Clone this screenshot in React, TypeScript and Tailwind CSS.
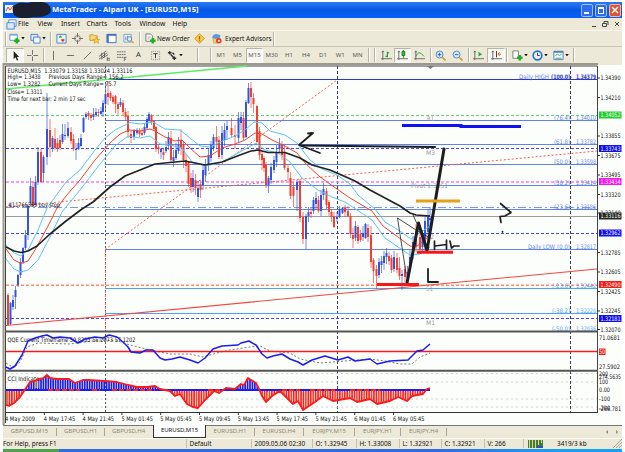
import React from 'react';
import clsx from 'clsx';

type Point = [number, number];
// x, high, low, body top, body bottom, bullish
type Candle = [number, number, number, number, number, 0 | 1];

const candles: Candle[] = [
    [8, 293, 325, 295, 325, 0], [10.5, 302, 325, 303, 324, 1], [13, 295, 310, 300, 307, 1], [15.5, 286, 309, 290, 297, 1],
    [18, 274, 287, 275, 285, 1], [20.5, 258, 278, 262, 275, 1], [23, 247, 264, 248, 262, 1], [25.5, 230, 250, 235, 248, 1],
    [28, 204, 240, 206, 235, 1], [30.5, 178, 204, 186, 203, 1], [33, 182, 206, 187, 206, 0], [35.5, 176, 204, 182, 205, 1],
    [38, 147, 185, 152, 182, 1], [41, 148, 183, 152, 182, 0], [43.5, 155, 182, 157, 173, 1], [47, 93, 165, 129, 157, 1],
    [50, 119, 157, 130, 147, 0], [52.5, 136, 152, 138, 149, 1], [55, 128, 150, 139, 148, 0], [57.5, 138, 152, 143, 148, 0],
    [60, 135, 150, 140, 148, 0], [62.5, 124, 144, 134, 142, 1], [65, 124, 140, 135, 136, 1], [68, 122, 138, 128, 136, 1],
    [71, 127, 144, 132, 141, 0], [73.5, 134, 151, 139, 149, 0], [76, 143, 160, 149, 150, 1], [78.5, 138, 150, 143, 149, 1],
    [81, 134, 147, 138, 146, 1], [83.5, 117, 133, 118, 132, 1], [86, 112, 119, 114, 117, 1], [88.5, 111, 120, 113, 116, 0],
    [91, 113, 121, 115, 118, 0], [93.5, 108, 120, 114, 117, 1], [96, 108, 117, 112, 115, 1], [98.5, 109, 117, 112, 113, 0],
    [101, 107, 115, 111, 114, 1], [103, 100, 117, 103, 112, 1], [105.5, 82, 110, 94, 104, 1], [108, 81, 105, 93, 97, 0],
    [110.5, 91, 101, 93, 98, 0], [113, 95, 104, 97, 102, 0], [115.5, 95, 113, 96, 104, 0], [118, 102, 115, 104, 109, 0],
    [120.5, 98, 107, 102, 105, 1], [123, 100, 115, 103, 112, 0], [125.5, 108, 121, 112, 117, 0], [128, 111, 138, 116, 132, 0],
    [131, 130, 143, 134, 138, 0], [134, 129, 140, 131, 137, 1], [137, 128, 135, 130, 133, 1], [139.5, 128, 137, 131, 134, 0],
    [142, 128, 136, 133, 135, 0], [144.5, 123, 135, 127, 133, 1], [147, 117, 129, 119, 128, 1], [149, 112, 123, 114, 121, 1],
    [151.5, 114, 125, 115, 122, 0], [154, 120, 131, 121, 129, 0], [156, 126, 152, 127, 149, 0], [158.5, 145, 154, 147, 149, 0],
    [161, 148, 159, 149, 152, 1], [163.5, 149, 160, 152, 155, 0], [166, 141, 153, 147, 151, 1], [168.5, 132, 150, 137, 146, 1],
    [171, 131, 162, 138, 160, 0], [173.5, 150, 167, 157, 161, 1], [176, 143, 160, 150, 158, 1], [178.5, 137, 154, 145, 151, 1],
    [181, 129, 155, 140, 148, 0], [183.5, 142, 168, 144, 160, 0], [186, 154, 172, 160, 166, 0], [188.5, 162, 187, 162, 184, 0],
    [191, 173, 193, 178, 187, 0], [193, 170, 192, 178, 187, 1], [195.5, 174, 195, 180, 188, 0], [198, 181, 202, 188, 197, 1],
    [200.5, 180, 198, 184, 190, 0], [203, 165, 190, 170, 185, 1], [205.5, 159, 182, 165, 175, 1], [208.5, 148, 171, 155, 165, 1],
    [211, 141, 162, 145, 158, 1], [213.5, 134, 151, 137, 148, 1], [216.5, 126, 148, 137, 142, 0], [219, 136, 159, 140, 157, 0],
    [222, 126, 159, 133, 155, 1], [224.5, 123, 146, 130, 140, 1], [227, 121, 140, 126, 130, 1], [231.5, 118, 137, 128, 135, 0],
    [235, 125, 149, 135, 137, 0], [238.5, 112, 142, 118, 138, 1], [241, 112, 130, 117, 123, 1], [243.5, 112, 140, 118, 138, 0],
    [246, 100, 138, 102, 137, 1], [248.5, 83, 104, 88, 103, 1], [251, 82, 108, 88, 97, 0], [253.5, 93, 113, 98, 104, 0],
    [257, 105, 143, 106, 142, 0], [259.5, 127, 160, 131, 155, 0], [262, 152, 170, 154, 160, 0], [264, 156, 172, 158, 168, 0],
    [266, 162, 188, 165, 185, 0], [268.5, 176, 193, 178, 185, 1], [271, 163, 184, 167, 180, 1], [274, 156, 173, 160, 170, 1],
    [276.5, 145, 167, 152, 162, 1], [279.5, 138, 153, 145, 149, 1], [282, 141, 160, 145, 155, 0], [284.5, 145, 170, 152, 168, 0],
    [288, 164, 180, 168, 172, 0], [290.5, 172, 199, 178, 196, 0], [293.5, 182, 207, 187, 196, 0], [297, 180, 211, 182, 190, 1],
    [300, 179, 222, 181, 218, 0], [303, 212, 244, 217, 239, 0], [306, 214, 249, 216, 239, 1], [308.5, 207, 222, 212, 216, 1],
    [311, 208, 218, 212, 214, 0], [313.5, 197, 214, 200, 211, 1], [316, 192, 210, 198, 204, 1], [318.5, 196, 213, 200, 211, 0],
    [321, 190, 216, 195, 211, 1], [323.5, 183, 200, 189, 195, 1], [326.5, 188, 209, 191, 205, 0], [329, 200, 216, 202, 212, 0],
    [331.5, 209, 222, 212, 217, 0], [334, 212, 228, 216, 227, 0], [337, 212, 222, 217, 219, 1], [339.5, 206, 218, 209, 217, 1],
    [342.5, 207, 214, 208, 213, 1], [345, 205, 217, 208, 212, 0], [348, 206, 217, 211, 216, 0], [350.5, 213, 238, 216, 234, 0],
    [353, 228, 248, 235, 239, 0], [355.5, 221, 241, 226, 238, 1], [358, 225, 244, 227, 241, 0], [360.5, 230, 242, 234, 240, 0],
    [363, 226, 241, 234, 237, 1], [365.5, 223, 239, 224, 238, 1], [368, 224, 242, 228, 237, 0], [371, 226, 268, 235, 262, 0],
    [373.5, 258, 283, 260, 271, 0], [376.5, 265, 289, 269, 276, 0], [379, 258, 278, 262, 275, 1], [381.5, 256, 273, 261, 265, 1],
    [384, 251, 270, 256, 263, 1], [386.5, 248, 264, 253, 257, 1], [389, 252, 265, 256, 261, 0], [391.5, 255, 273, 258, 270, 0],
    [394, 251, 272, 257, 269, 1], [397, 253, 273, 258, 270, 0], [399.5, 257, 280, 268, 276, 0], [402, 270, 290, 274, 276, 1],
    [405, 266, 282, 269, 277, 0], [407.5, 266, 282, 272, 278, 1], [410, 250, 272, 257, 269, 1], [413, 236, 259, 242, 253, 1],
    [416, 224, 252, 231, 246, 0], [420, 228, 252, 237, 250, 0], [422.5, 230, 252, 235, 247, 1], [425, 216, 250, 221, 245, 1],
    [428, 210, 235, 216, 232, 1], [430, 207, 228, 218, 220, 1],
];

const slowMa: Point[] = [
    [6, 247], [14, 251], [21, 252.5], [28, 251], [37, 246], [50, 234], [66, 221], [82, 209], [93, 202], [101, 195], [110, 187],
    [125, 176], [140, 170], [155, 164], [170, 162.5], [185, 161], [195, 163], [205, 165], [222, 162], [240, 155], [251, 151],
    [258, 150], [268, 152.5], [285, 152.5], [300, 158], [312, 165], [330, 170], [337, 173], [355, 181], [370, 190], [385, 198],
    [400, 206], [410, 213], [416, 215], [430, 216],
];
const midMa: Point[] = [
    [6, 249], [14, 260], [21, 263.5], [28, 261], [35, 250], [47, 228], [57, 208], [66, 196], [80, 180], [95, 160], [110, 143],
    [120, 134], [129, 130], [140, 131], [150, 129], [155, 131], [165, 137], [175, 141], [182, 140], [190, 148], [200, 157],
    [210, 156], [222, 148], [235, 144], [245, 140], [255, 133], [262, 134], [272, 140], [285, 146], [297, 153], [305, 163],
    [320, 177], [337, 189], [350, 198], [372, 211], [383, 226], [398, 237], [410, 246], [416, 247], [430, 236],
];
const upperBand: Point[] = [
    [6, 245], [14, 253], [21, 256], [28, 250], [38, 230], [47, 208], [55, 197], [66, 182], [80, 170], [95, 150], [105, 138],
    [115, 130], [130, 122.5], [140, 124], [153, 122], [165, 129], [180, 130], [190, 138], [200, 146], [210, 147], [220, 142],
    [235, 136], [245, 130], [254, 122], [262, 123], [270, 131], [285, 135], [297, 143], [310, 160], [322, 169], [337, 175],
    [350, 184], [358, 195], [375, 209], [385, 222], [400, 231], [411, 239], [430, 226],
];
const lowerBand: Point[] = [
    [6, 259], [14, 269], [21, 272], [28, 270], [38, 260], [50, 237], [62, 212], [80, 190], [100, 164], [115, 146], [128, 136],
    [140, 138], [150, 136], [160, 144], [170, 145], [182, 148], [192, 162], [205, 166], [220, 163], [240, 152], [256, 143],
    [265, 150], [278, 153], [290, 162], [302, 178], [318, 190], [332, 197], [345, 202], [360, 212], [372, 220], [385, 238],
    [398, 247], [410, 255], [420, 254], [430, 247],
];
const qqe: Point[] = [
    [6, 367], [10, 369], [15, 366], [22, 355], [28, 341], [35, 338], [42, 336], [47, 335], [53, 338], [60, 337], [70, 338],
    [78, 343], [85, 339], [95, 337], [103, 338], [109, 335], [117, 337], [123, 342], [128, 347], [131, 352], [140, 353],
    [146, 350], [153, 350], [160, 358], [165, 360], [172, 359], [180, 357], [190, 360], [198, 363], [205, 358], [213, 349],
    [222, 346], [238, 345], [241, 343], [249, 341], [256, 345], [262, 354], [267, 358], [273, 356], [282, 354], [290, 359],
    [298, 362], [303, 365], [312, 360], [325, 356], [338, 360], [348, 357], [355, 361], [370, 359], [377, 364], [390, 361],
    [408, 360], [417, 351], [423, 350], [430, 344],
];
const qqeSlow: Point[] = [
    [6, 363], [14, 368], [20, 362], [27, 347], [38, 343], [70, 344], [100, 340], [118, 341], [130, 345], [150, 350], [170, 354],
    [190, 354], [203, 357], [217, 353], [230, 350], [250, 347], [260, 346], [270, 351], [290, 353], [300, 359], [320, 363],
    [370, 359], [385, 361], [400, 364], [412, 364], [420, 357], [430, 353],
];
const cci: Point[] = [
    [6, 405], [9, 406], [14, 403], [20, 397], [26, 388], [30, 382], [35, 381], [38, 379], [42, 379], [47, 375], [50, 378],
    [57, 379], [69, 379], [75, 383], [83, 380], [88, 380], [105, 381], [117, 382], [128, 385], [137, 387], [147, 387],
    [155, 386], [160, 389], [170, 391], [175, 396], [180, 394], [187, 404], [193, 407], [198, 408], [205, 400], [214, 391],
    [219, 393], [226, 388], [235, 389], [241, 384], [244, 385], [248, 378], [256, 383], [259, 389], [262, 396], [266, 402],
    [272, 396], [280, 391], [285, 396], [293, 404], [298, 401], [303, 410], [309, 406], [315, 402], [323, 396], [333, 401],
    [350, 398], [357, 402], [370, 399], [377, 404], [390, 401], [398, 397], [407, 401], [412, 396], [423, 394], [427, 389],
    [430, 388],
];

const valueAt = (pts: Point[], x: number) => {
    for (let i = 1; i < pts.length; i++) {
        if (x <= pts[i][0]) {
            const [x0, y0] = pts[i - 1];
            const [x1, y1] = pts[i];
            return y0 + ((y1 - y0) * (x - x0)) / (x1 - x0);
        }
    }
    return pts[pts.length - 1][1];
};
const cciBars = Array.from({ length: 174 }, (_, i) => 7 + i * 2.43).map((x) => ({ x, y: valueAt(cci, x) }));

// fibonacci levels of the daily range: y, colour, ratio label, its x and width, price
const fibs: [number, string, string, number, number, string][] = [
    [79.5, '#2c38c8', '(100.0)-', 551, 21, '1.34379'],
    [120.5, '#5f83e8', '(76.4)-', 554, 18, '1.34010'],
    [144.5, '#5f83e8', '(61.8)-', 554, 18, '1.33782'],
    [164.5, '#5f83e8', '(50.0)-', 554, 18, '1.33598'],
    [185.5, '#5f83e8', '(38.2)-', 554, 18, '1.33414'],
    [209.5, '#5f83e8', '(23.6)-', 554, 18, '1.33186'],
    [249.5, '#5f83e8', '(0.0)-', 557, 15, '1.32817'],
    [288.5, '#4aa3f5', '(-23.6)-', 552, 20, '1.32442'],
    [313.5, '#4aa3f5', '(-38.2)-', 552, 20, '1.32220'],
];

const prices: [number, string, string?][] = [
    [78, '1.34390'], [97.5, '1.34210'], [136, '1.33855'], [155.5, '1.33675'], [175, '1.33495'], [194.5, '1.33320'],
    [213, '1.33140'], [252.5, '1.32785'], [272, '1.32605'], [291.5, '1.32425'], [311, '1.32245'], [329.5, '1.32070'],
    [115, '1.34052', '#1fce2c'], [148.5, '1.33743', '#0d0df0'], [181.5, '1.33434', '#ff12f2'], [216, '1.33116', '#262626'],
    [233, '1.32962', '#0d0df0'], [284.5, '1.32490', '#fb1a12'], [318.5, '1.32181', '#0d0df0'],
];

const times = ['4 May 2009', '4 May 17:45', '4 May 21:45', '5 May 01:45', '5 May 05:45', '5 May 09:45', '5 May 13:45', '5 May 17:45', '5 May 21:45', '6 May 01:45', '6 May 05:45'];

const T: React.FC<{ x: number; y: number; w: number; fill?: string; bold?: boolean; children: string }> = ({ x, y, w, fill = '#111', bold, children }) => (
    <text x={x} y={y} textLength={w} lengthAdjust="spacingAndGlyphs" fill={fill} fontSize={6.2} fontWeight={bold ? 700 : 400} xmlSpace="preserve">
        {children}
    </text>
);

const Line: React.FC<{ pts: Point[]; color: string; width?: number; dash?: string }> = ({ pts, color, width = 1, dash }) => (
    <polyline points={pts.map((p) => p.join(',')).join(' ')} fill="none" stroke={color} strokeWidth={width} strokeDasharray={dash} strokeLinejoin="round" />
);

const Chart = () => (
    <svg viewBox="3 63 619 362" className="block h-[362px] w-[619px] shrink-0 overflow-visible font-['DejaVu_Sans',sans-serif]">
        <rect x="3" y="63" width="619" height="362" fill="#ece9d8" />
        <rect x="5" y="65" width="617" height="360" fill="#fcfefc" />
        <path d="M3.5 425V64H598" fill="none" stroke="#9c998c" strokeWidth="2" />
        <path d="M5.5 423V66H597.5V412" fill="none" stroke="#444" />

        {/* vertical separators */}
        <path d="M105.5 66V412" stroke="#555" strokeDasharray="2 2" />
        <path d="M105.5 249V331" stroke="#f66" strokeDasharray="2 2" strokeDashoffset="2" />
        <path d="M337.5 66V412M570.5 66V412" stroke="#3c3c55" strokeDasharray="3 2" />

        {/* horizontal levels */}
        <path d="M6 115.5H597" stroke="#6fcf6f" strokeDasharray="3 2" />
        <path d="M6 148.5H597M6 233.5H597M6 318.5H597" stroke="#4444ee" strokeDasharray="3 2" />
        <path d="M6 182H597" stroke="#ff7af0" strokeDasharray="3 2" strokeWidth="1.3" />
        <path d="M6 285.2H597" stroke="#ff8a70" strokeDasharray="3 2" strokeWidth="1.4" />
        <path d="M6 207.5H597" stroke="#7b98e8" strokeDasharray="8 3 2 3" />
        <path d="M6 216.5H597" stroke="#9a9a9a" />
        {fibs.map(([y, color, ratio, x, w, price]) => (
            <g key={y}>
                <path d={`M105 ${y}H597`} stroke={color} />
                <T x={x} y={y - 1} w={w} fill={color} bold={y < 80}>{ratio}</T>
                <T x={576} y={y - 1} w={20} fill={color} bold={y < 80}>{price}</T>
            </g>
        ))}
        <T x={519} y={78.5} w={30} fill="#5f83e8">Daily HIGH</T>
        <T x={528} y={248.5} w={27} fill="#5f83e8">Daily LOW</T>
        <T x={552} y={331} w={20} fill="#4aa3f5">(-50.0)-</T>
        <T x={576} y={331} w={20} fill="#4aa3f5">1.32036</T>

        {/* trend lines */}
        <path d="M6 89L247 66" stroke="#5fec5f" strokeWidth="1.4" />
        <path d="M6 325.5L597 269" stroke="#f4473e" strokeWidth="1.1" />
        <path d="M6 207L597 151M105 249.5L337 80" stroke="#f4604f" strokeDasharray="2 2" />

        {/* pivots */}
        <T x={427} y={121} w={7} fill="#999">R1</T>
        <T x={426} y={155} w={9} fill="#999">M3</T>
        <T x={411} y={187.5} w={37} fill="#999">Pivot 1.3351</T>
        <T x={426} y={239} w={8} fill="#999">M2</T>
        <T x={426} y={291} w={7} fill="#999">S1</T>
        <T x={426} y={324.5} w={9} fill="#999">M1</T>

        {candles.map(([x, high, low, top, bottom, up]) => (
            <g key={x} stroke={up ? '#3454e0' : '#f24030'}>
                <path d={`M${x} ${high}V${low}`} strokeWidth="0.9" strokeOpacity="0.75" />
                <path d={`M${x} ${top}V${Math.max(bottom, top + 1)}`} strokeWidth="2" />
            </g>
        ))}

        <Line pts={upperBand} color="#5cc4f0" />
        <Line pts={lowerBand} color="#5cc4f0" />
        <Line pts={midMa} color="#ee4436" />
        <Line pts={slowMa} color="#222" width={1.7} />

        <g>
            <T x={7.5} y={73} w={125}>EURUSD,M15  1.33079 1.33158 1.33024 1.33116</T>
            <T x={7.5} y={79.2} w={33}>High= 1.3438</T>
            <T x={48.5} y={79.2} w={75}>Previous Days Range= 156.2</T>
            <T x={7.5} y={86.3} w={33}>Low= 1.3282</T>
            <T x={48.5} y={86.3} w={68}>Current Days Range= 75.7</T>
            <T x={7.5} y={93.6} w={35}>Close= 1.3311</T>
            <T x={7.5} y={101} w={78}>Time for next bar: 2 min 17 sec</T>
            <T x={8} y={206.5} w={52}>#11766369 buy stop</T>
        </g>

        {/* hand drawn marks */}
        <g fill="none" stroke="#1e1e1e" strokeLinejoin="round" strokeLinecap="round">
            <path d="M301 145.5L348 146L435 147" strokeWidth="2" />
            <path d="M313 133L299 145L320 153M308 133.5L312 133" strokeWidth="1.8" />
            <path d="M406 273L397.5 218L416 230L430 238M413 215L419 228" strokeWidth="0.8" />
            <path d="M407 283L418.5 223L427 250.5L444 149" strokeWidth="3" />
            <path d="M434.5 241V249.5M435 246L446.500 244.5M446.500 240V249M450 241L451.500 248L454 246H459" strokeWidth="1.7" />
            <path d="M428 269V282H438" strokeWidth="1.8" />
            <path d="M500.5 203.5L511 212.5L505 216L500 216.5L501 222.5M502.5 231.5V232" strokeWidth="1.7" />
        </g>
        <path d="M402 125.5H461V126.5H521" fill="none" stroke="#1010f4" strokeWidth="3" />
        <path d="M416 201H460" stroke="#e5a01c" strokeWidth="3" />
        <path d="M417 252.3H453M377 284.5H419" stroke="#fa1616" strokeWidth="3" />
        <path d="M427 66H434L430.5 69Z" fill="#777" />

        {/* QQE window */}
        <path d="M5 331.5H598M5 370.8H598" stroke="#555" strokeWidth="2" />
        <Line pts={qqeSlow} color="#555" dash="2 2" width={0.8} />
        <path d="M6 351.5H597" stroke="#fb1818" strokeWidth="1.6" />
        <T x={7.5} y={341.5} w={128}>QQE Current Timeframe 59.8293 55.2073 57.1202</T>
        <Line pts={qqe} color="#1c1cf0" width={1.5} />

        {/* CCI window */}
        <path d="M6 373.5H597M6 382H597M6 399H597M6 407H597" stroke="#c9c9c4" strokeDasharray="2 3" strokeWidth="0.8" />
        {cciBars.map(({ x, y }, i) => (
            <path key={i} d={`M${x} 390V${y}`} strokeWidth="1.7" stroke={y < 390 ? '#1a1af0' : i % 3 ? '#fa2020' : '#e85030'} />
        ))}
        <path d="M36 380V388M37.8 380V388M268 392V399" stroke="#f4d840" />
        <path d="M6 390H430" stroke="#1c1cf0" strokeWidth="2.2" />
        <path d="M48 390H80M92 390H100M112 390H155M208 390H220M282 390H300M310 390H335M350 390H380" stroke="#fa2020" strokeWidth="2" strokeDasharray="5 2" />
        <T x={7.5} y={380.5} w={34}>CCI Indicator</T>
        <Line pts={cci} color="#fa1c1c" width={1.8} />
        <path d="M5 412.5H598" stroke="#333" />

        {/* price axis */}
        <g className="font-['DejaVu_Sans_Condensed','DejaVu_Sans',sans-serif]">
            {prices.map(([y, label, bg]) => (
                <g key={label}>
                    {bg ? <rect x="599" y={y - 3.5} width="22.5" height="7" fill={bg} /> : <path d={`M597 ${y}h3`} stroke="#333" />}
                    <T x={600.5} y={y + 2.3} w={20} fill={bg ? '#fff' : '#111'}>{label}</T>
                </g>
            ))}
            <T x={599} y={339.5} w={21}>71.0681</T>
            <T x={599} y={369} w={21}>27.5902</T>
            <rect x="599" y="348.5" width="6.5" height="6.5" fill="#fb1a12" />
            <T x={599.5} y={353.8} w={5.5} fill="#fff">50</T>
            <T x={599} y={378.5} w={22}>274.5635</T>
            <T x={599} y={375.5} w={9}>200</T>
            <T x={599} y={384} w={9}>100</T>
            <T x={599} y={392.3} w={11}>0.00</T>
            <T x={599} y={401} w={11}>-100</T>
            <T x={599} y={409.5} w={11}>-200</T>
            <T x={599} y={410.5} w={22}>-266.781</T>
        </g>

        {/* time axis */}
        {times.map((t, i) => (
            <g key={t}>
                <path d={`M${5.5 + i * 38.8} 412v3`} stroke="#333" />
                <T x={5 + i * 38.8} y={421} w={i ? 31.5 : 30}>{t}</T>
            </g>
        ))}
    </svg>
);

const Icon: React.FC<{ w: number; children?: React.ReactNode; on?: boolean; menu?: boolean }> = ({ w, children, on, menu }) => (
    <span className={clsx('flex h-[15px] shrink-0 items-center justify-center gap-px', on && 'border border-[#b8b5a5] border-r-white border-b-white bg-[#f8f7f1]')} style={{ width: w }}>
        <svg viewBox="0 0 12 12" className="h-[11px] w-[11px] shrink-0" fill="none">{children}</svg>
        {menu && <svg viewBox="0 0 4 3" className="h-[2.5px] w-[4px] shrink-0"><path d="M0 0H4L2 3Z" fill="#111" /></svg>}
    </span>
);

const Sep: React.FC<{ w?: number }> = ({ w = 5 }) => (
    <span className="flex h-[14px] shrink-0 justify-center" style={{ width: w }}>
        <i className="w-px bg-[#b5b2a2]" />
        <i className="w-px bg-white" />
    </span>
);

const GreenPlus = () => <path d="M8.5 5.5V11.5M5.5 8.5H11.5" stroke="#1fae2b" strokeWidth="2.8" />;
const Axes = () => <path d="M2 1V11M0 9.5H12M1 2.5L2 1L3 2.5" stroke="#666" />;

const menus: [string, number][] = [['File', 19.5], ['View', 23.5], ['Insert', 25.5], ['Charts', 28], ['Tools', 25], ['Window', 33], ['Help', 20]];
const frames: [string, number][] = [['M1', 16], ['M5', 17], ['M15', 17], ['M30', 17.5], ['H1', 17], ['H4', 17], ['D1', 17], ['W1', 17.5], ['MN', 17]];
const tabs: [string, number][] = [['GBPUSD,M15', 54], ['GBPUSD,H1', 48], ['GBPUSD,H4', 48], ['EURUSD,M15', 53], ['EURUSD,H1', 49], ['EURUSD,H4', 49], ['EURJPY,M15', 51], ['EURJPY,H1', 46], ['EURJPY,H4', 46]];
const status: [string, number][] = [['For Help, press F1', 184], ['Default', 65], ['2009.05.06 02:30', 61], ['O: 1.32945', 44], ['H: 1.33008', 43], ['L: 1.32921', 42], ['C: 1.32921', 43], ['V: 266', 39]];

const TitleBar = () => (
    <header className="flex h-[16px] shrink-0 items-center bg-gradient-to-b from-[#2a7bf5] via-[#0757e4] to-[#0660fa] pl-[2px] text-white">
        <svg viewBox="0 0 47 16" className="h-[16px] w-[47px] shrink-0">
            <rect x="0" y="3" width="8" height="8" fill="#f4f0ea" />
            <path d="M1 9L3 5L5 8L8 4" stroke="#e04a3a" fill="none" />
            <path d="M8 5Q12 -1 22 1Q36 -2 43 2Q47 6 45 11Q40 16 28 15Q14 18 9 13Q7 9 8 5Z" fill="#1b1f2e" />
        </svg>
        <b className="font-['Open_Sans',sans-serif] text-[7.6px] leading-none whitespace-pre">MetaTrader - Alpari UK - [EURUSD,M15]</b>
        <div className="ml-auto flex gap-[2px] pr-px">
            <span className="flex h-[13px] w-[12px] items-end rounded-[2px] border border-[#9fc0f8] bg-[#2f6bea] p-[2px]"><i className="h-[2px] w-[5px] bg-white" /></span>
            <span className="flex h-[13px] w-[12px] rounded-[2px] border border-[#9fc0f8] bg-[#2f6bea] p-[2px]"><i className="h-[7px] w-[6px] border border-t-2 border-white" /></span>
            <span className="flex h-[13px] w-[12px] items-center justify-center rounded-[2px] border border-[#f0b8a8] bg-[#e2522c]">
                <svg viewBox="0 0 8 8" className="h-[8px] w-[8px]"><path d="M1 1L7 7M7 1L1 7" stroke="#fff" strokeWidth="1.5" /></svg>
            </span>
        </div>
    </header>
);

const MenuBar = () => (
    <nav className="flex h-[13px] shrink-0 items-center border-b border-[#f8f7f0] pl-px text-[6.8px] leading-none">
        <Icon w={14}>
            <path d="M3 1H11V8H3Z" fill="#fff" stroke="#4a86d8" />
            <path d="M1 4H9V11H1Z" fill="#d8e8fb" stroke="#4a86d8" />
        </Icon>
        {menus.map(([label, w]) => <span key={label} className="shrink-0" style={{ width: w }}>{label}</span>)}
        <svg viewBox="0 0 30 8" className="ml-auto h-[8px] w-[30px]" fill="none" stroke="#444">
            <path d="M0 6.5H4M10.5 3.5H14.5V6.5H10.5ZM12 3V1.5H16V5M23 2L27 6M27 2L23 6" />
        </svg>
    </nav>
);

const StandardBar = () => (
    <div className="flex h-[16px] shrink-0 items-center border-b border-[#c9c6b6] pl-[2px] text-[6.4px]">
        <Sep w={2} />
        <Icon w={20} menu>
            <path d="M1 1.5H9V8H1Z" fill="#fff" stroke="#5c8fc8" />
            <path d="M1 2.5H9" stroke="#7fb2ea" />
            <GreenPlus />
        </Icon>
        <Icon w={21} menu>
            <path d="M1 1.5H8.5V8H1Z" fill="#d9e9fb" stroke="#4a80c0" />
            <path d="M4 4.5H11V11H4Z" fill="#f3f8fd" stroke="#4a80c0" />
        </Icon>
        <Sep w={5} />
        <Icon w={16}>
            <path d="M1 1.5H11V11H1Z" fill="#eaf3fc" stroke="#4a80c0" />
            <path d="M3.5 5L5 3.5L6 5" stroke="#1fae2b" strokeWidth="1.5" />
            <path d="M6 7L7.5 8.5L9 7" stroke="#e03a20" strokeWidth="1.8" />
        </Icon>
        <Icon w={17}>
            <circle cx="6" cy="6" r="3.2" stroke="#777" />
            <path d="M6 0V4.5M6 7.5V12M0 6H4.5M7.5 6H12" stroke="#666" />
        </Icon>
        <Icon w={17}>
            <path d="M1 2H5L6 3H9V8H1Z" fill="#f6da7a" stroke="#c59a2a" />
            <path d="M8 4.5L9.1 7H11.7L9.7 8.6L10.4 11.3L8 9.7L5.6 11.3L6.3 8.6L4.3 7H6.9Z" fill="#ffd534" stroke="#c98a1a" strokeWidth=".6" />
        </Icon>
        <Icon w={17}>
            <path d="M1 1.5H11V10.5H1Z" fill="#fff" stroke="#3a70c0" />
            <path d="M1 2H11M2 2V10" stroke="#3a70c0" strokeWidth="2" />
        </Icon>
        <Icon w={17}>
            <path d="M1 1.5H9V10H1Z" fill="#eef4fb" stroke="#7f9fc8" />
            <path d="M3 4V8M5 3V7" stroke="#5f8fc8" />
            <circle cx="7" cy="6.5" r="2.5" fill="#dcebf8" stroke="#5a80b0" />
            <path d="M9 8.5L11.5 11" stroke="#d9a32a" strokeWidth="1.5" />
        </Icon>
        <Sep w={6} />
        <Icon w={14}>
            <path d="M1 1H6L8 3V9H1Z" fill="#fff" stroke="#777" />
            <path d="M3 4.5H6M3 6.5H5" stroke="#999" />
            <GreenPlus />
        </Icon>
        <span className="w-[34px] shrink-0 whitespace-nowrap">New Order</span>
        <Icon w={17}>
            <path d="M6 .8L11.2 6L6 11.2L.8 6Z" fill="#fbd24a" stroke="#d08a18" />
            <path d="M6 3.5V7M6 8V9" stroke="#a85a10" strokeWidth="1.5" />
        </Icon>
        <Icon w={17}>
            <path d="M1 5Q3 0 8 1.5Q11 2 10 5L6 7Z" fill="#5a9be0" />
            <path d="M2 6H8L7 11H3Z" fill="#ecc878" stroke="#b98a38" strokeWidth=".5" />
            <circle cx="8.5" cy="8.5" r="3" fill="#e8381e" />
            <path d="M7.5 7.5H9.5V9.5H7.5Z" fill="#fff" />
        </Icon>
        <span className="w-[48px] shrink-0 whitespace-nowrap">Expert Advisors</span>
        <Sep w={2} />
    </div>
);

const DrawingBar = () => (
    <div className="flex h-[16px] shrink-0 items-center pl-[3px]">
        <Icon w={18} on><path d="M4 1V10L6 8L7.5 11.5L9 11L7.5 7.5H10Z" fill="#222" /></Icon>
        <Icon w={17}><path d="M6 0V5M6 7V12M0 6H5M7 6H12" stroke="#666" /></Icon>
        <Sep w={5} />
        <Icon w={15}><path d="M6 1V11" stroke="#666" /></Icon>
        <Icon w={18}><path d="M2 6H10" stroke="#666" /></Icon>
        <Icon w={17}><path d="M2 10L10 2" stroke="#666" /></Icon>
        <Icon w={17}><path d="M0 7L8 1M0 10L9 3M2 10L10 5M3 3V8M6 3V8M9 9H12M9 11H12M9 8V11.5" stroke="#555" strokeWidth=".9" /></Icon>
        <Icon w={17}><path d="M1 2H11M1 5H11M1 8H8M9 8H12M9 10H11M9 8V12" stroke="#666" strokeDasharray="2 .5" /></Icon>
        <span className="w-[17px] shrink-0 text-center text-[7.5px] text-[#333]">A</span>
        <Icon w={17}>
            <path d="M1.5 1.5H10.5V10.5H1.5Z" stroke="#888" strokeDasharray="1 1" />
            <path d="M3.5 4H8.5M6 4V9" stroke="#333" />
        </Icon>
        <Icon w={22} menu><path d="M1 3H5M3 1V5M4 5L8 9M6 9H10M8 7V11M6 3L8 5" stroke="#333" strokeWidth="1.5" /></Icon>
        <Sep w={23} />
        <Sep w={4} />
        {frames.map(([f, w]) => (
            <span key={f} className={clsx('flex h-[15px] shrink-0 items-center justify-center text-[6px] text-[#555]', f === 'M15' && 'border border-[#b8b5a5] border-r-white border-b-white bg-[#f8f7f1]')} style={{ width: w }}>{f}</span>
        ))}
        <Sep w={5} />
        <Sep w={7} />
        <Icon w={16}><Axes /><path d="M7 2V8M7 3H9M5 7H7" stroke="#1f9e2b" strokeWidth="1.3" /></Icon>
        <Icon w={17} on><Axes /><path d="M7 0V9" stroke="#1f9e2b" /><path d="M5.5 1.5H8.5V6H5.5Z" fill="#2cc43a" stroke="#15801f" /></Icon>
        <Icon w={17}><Axes /><path d="M2 7Q5 1 8 4L11 7" stroke="#1f9e2b" /></Icon>
        <Sep w={6} />
        {['in', 'out'].map((z) => (
            <Icon key={z} w={z === 'in' ? 13 : 20}>
                <circle cx="5" cy="5" r="3.8" fill="#d4e9fa" stroke="#4a84c8" />
                <path d={z === 'in' ? 'M3 5H7M5 3V7' : 'M3 5H7'} stroke="#2c62b0" />
                <path d="M8 8L11.5 11.5" stroke="#d9a32a" strokeWidth="2" />
            </Icon>
        ))}
        <Sep w={3} />
        <Icon w={17}><Axes /><path d="M6 2L10 4.5L6 7Z" fill="#22b030" /></Icon>
        <Icon w={18} on><Axes /><path d="M6 1V8" stroke="#333" /><path d="M11 4.5H8M9.5 2.5L7.5 4.5L9.5 6.5" stroke="#d06018" /></Icon>
        <Sep w={4} />
        <Icon w={21} menu><path d="M1 1H7V9H1Z" fill="#fff" stroke="#777" /><GreenPlus /></Icon>
        <Icon w={20} menu><circle cx="6" cy="6" r="4.7" fill="#e8f3fd" stroke="#2a6fd0" strokeWidth="1.8" /><path d="M6 3V6H8.5" stroke="#333" /></Icon>
        <Icon w={22} menu>
            <path d="M1 1.5H11V10.5H1Z" fill="#f3f8fd" stroke="#4a80c0" />
            <path d="M1 2H11" stroke="#4a80c0" strokeWidth="2" />
            <path d="M2.5 6L5 4.5L7 6L9.5 4.5M2.5 9H9.5" stroke="#4a9a60" />
        </Icon>
        <Sep w={3} />
    </div>
);

export default function App() {
    return (
        <div className="flex h-[452px] w-[625px] flex-col overflow-hidden bg-white px-[3px] pt-[2px] font-['Noto_Sans',sans-serif] text-[#111]">
            <div className="flex w-[619px] flex-col bg-[#ece9d8]">
                <TitleBar />
                <MenuBar />
                <StandardBar />
                <DrawingBar />
                <Chart />
                <div className="flex h-[12.5px] shrink-0 border-t border-[#777] text-[6px] text-[#8d8a7c]">
                    {tabs.map(([tab, w], i) => (
                        <span
                            key={tab}
                            className={clsx(
                                'flex shrink-0 items-center justify-center whitespace-nowrap',
                                i === 3 ? '-mt-px border-x border-b border-[#333] bg-white text-[#111]' : 'my-[2px] border-r border-[#aaa799]',
                                i === 2 && 'border-r-transparent',
                            )}
                            style={{ width: w }}
                        >
                            {tab}
                        </span>
                    ))}
                    <svg viewBox="0 0 16 8" className="mt-[2px] mr-[2px] ml-auto h-[8px] w-[16px]"><path d="M4 2V6L2 4ZM12 2V6L14 4Z" fill="#8d8a7c" /></svg>
                </div>
                <footer className="flex h-[11.5px] shrink-0 items-center border-t border-[#fbfaf4] text-[6.4px]">
                    {status.map(([label, w], i) => (
                        <span key={label} className={clsx('flex h-[9px] shrink-0 items-center border-r border-[#c4c1b1] whitespace-nowrap', i > 0 && 'pl-[2.5px]')} style={{ width: w }}>{label}</span>
                    ))}
                    <svg viewBox="0 0 15 8" className="ml-[4px] h-[8px] w-[15px] shrink-0">
                        <path d="M0 0H15V8H0Z" fill="#3f7a4a" />
                        <path d="M1.5 0V8M4.5 0V8M7.5 0V8M10.5 0V5M13.5 0V3" stroke="#e2dc6a" />
                        <path d="M9 7H15" stroke="#2a55b8" strokeWidth="2" />
                    </svg>
                    <span className="ml-[14px]">3419/3 kb</span>
                    <svg viewBox="0 0 9 9" className="ml-auto h-[9px] w-[9px]"><path d="M0 9L9 0M3 9L9 3M6 9L9 6" stroke="#a5a292" /></svg>
                </footer>
                <div className="flex h-[3px] shrink-0 bg-gradient-to-r from-[#2f6be6] from-70% to-[#19a0ee] to-90%"><i className="w-[56px] bg-[#4fa04f]" /></div>
            </div>
        </div>
    );
}
